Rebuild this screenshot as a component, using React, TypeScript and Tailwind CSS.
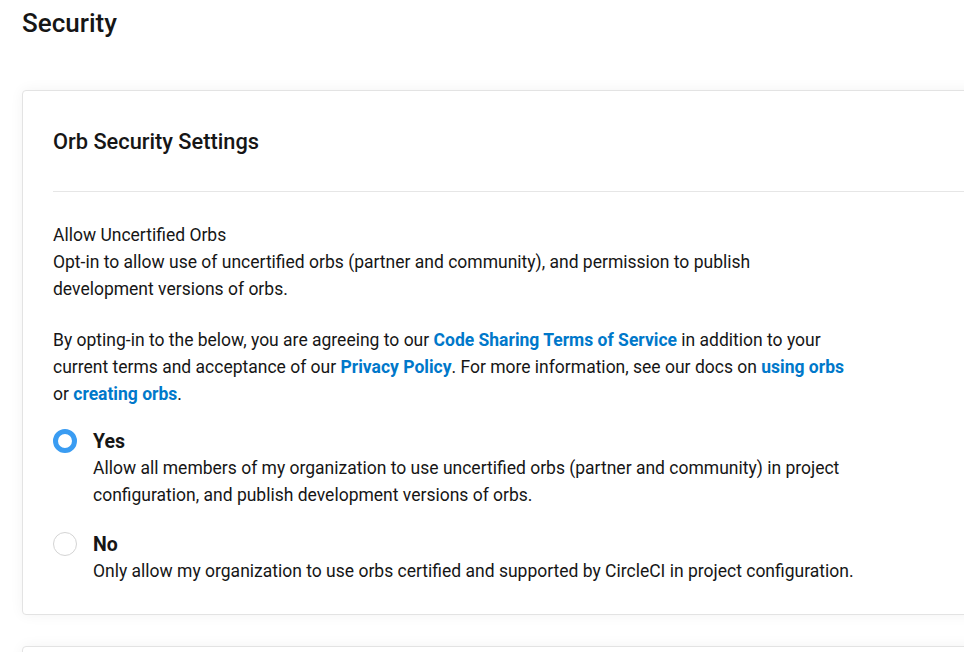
import React from "react";

function Radio({ checked }: { checked: boolean }) {
  return checked ? (
    <span className="mt-[1px] block h-6 w-6 shrink-0 rounded-full border-[5px] border-[#3a9cf2] bg-white" />
  ) : (
    <span className="mt-[1px] block h-6 w-6 shrink-0 rounded-full border border-[#d4d4d4] bg-white" />
  );
}

export default function App() {
  return (
    <div
      className="min-h-[652px] w-[964px] overflow-hidden bg-white text-[#161616]"
      style={{ fontFamily: "Roboto, 'Liberation Sans', sans-serif" }}
    >
      <div className="pl-[22px] pt-[7px]">
        <h1 className="text-[26px] font-medium leading-[32px]">Security</h1>
        <div className="mt-[51px] w-[980px] rounded-[4px] border border-[#e3e3e3] bg-white pl-[30px] pt-[35px] pb-[29px] shadow-[0_0_14px_rgba(0,0,0,0.05)]">
          <h2 className="text-[21.8px] font-medium leading-[32px]">Orb Security Settings</h2>
          <div className="mt-[33px] h-px bg-[#e6e6e6]" />
          <div className="mt-[30px] text-[17.5px] leading-[27px]">
            <div className="w-[796px]">
              <p>Allow Uncertified Orbs</p>
              <p>
                Opt-in to allow use of uncertified orbs (partner and community), and permission to publish
                development versions of orbs.
              </p>
              <p className="mt-[24px]">
                By opting-in to the below, you are agreeing to our{" "}
                <a className="font-bold text-[#0078ca]">Code Sharing Terms of Service</a> in addition to your
                current terms and acceptance of our <a className="font-bold text-[#0078ca]">Privacy Policy</a>. For
                more information, see our docs on <a className="font-bold text-[#0078ca]">using orbs</a> or{" "}
                <a className="font-bold text-[#0078ca]">creating orbs</a>.
              </p>
            </div>
            <div className="w-[810px]">
              <div className="mt-[20px] flex gap-[16px]">
                <Radio checked />
                <div className="flex-1">
                  <div className="text-[19.5px] font-bold leading-[27px]">Yes</div>
                  <p>
                    Allow all members of my organization to use uncertified orbs (partner and community) in project
                    configuration, and publish development versions of orbs.
                  </p>
                </div>
              </div>
              <div className="mt-[22px] flex gap-[16px]">
                <Radio checked={false} />
                <div className="flex-1">
                  <div className="text-[19.5px] font-bold leading-[27px]">No</div>
                  <p>Only allow my organization to use orbs certified and supported by CircleCI in project configuration.</p>
                </div>
              </div>
            </div>
          </div>
        </div>
        <div className="mt-[31px] h-[60px] w-[980px] rounded-[4px] border border-[#e3e3e3] bg-white shadow-[0_0_14px_rgba(0,0,0,0.05)]" />
      </div>
    </div>
  );
}
